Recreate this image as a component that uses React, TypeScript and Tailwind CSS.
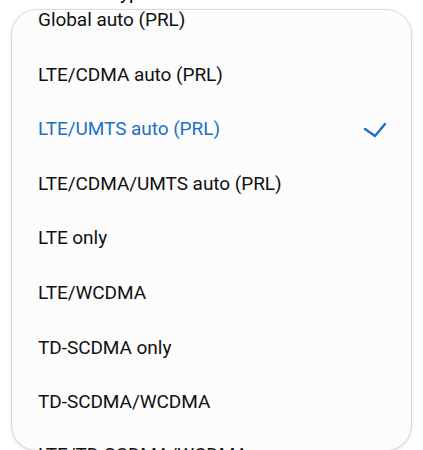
const modes = [
  "Global auto (PRL)",
  "LTE/CDMA auto (PRL)",
  "LTE/UMTS auto (PRL)",
  "LTE/CDMA/UMTS auto (PRL)",
  "LTE only",
  "LTE/WCDMA",
  "TD-SCDMA only",
  "TD-SCDMA/WCDMA",
  "LTE/TD-SCDMA/WCDMA",
]

const selected = "LTE/UMTS auto (PRL)"

function Check() {
  return (
    <svg width="24" height="20" viewBox="0 0 24 20" fill="none" className="mr-[-2px] mt-[2px]">
      <path d="M2 9 L12 16 L22 4" stroke="#1f6fc6" strokeWidth="2.4" strokeLinecap="round" strokeLinejoin="round" />
    </svg>
  )
}

export default function App() {
  return (
    <div className="relative w-[423px] h-[450px] overflow-hidden bg-white font-['Roboto',sans-serif]">
      {/* page content behind the popup */}
      <div className="-mt-[18px] pl-[38px] text-[19px] text-black leading-[22px]">Network type</div>

      <div className="absolute left-[11px] top-[9px] w-[401px] h-[442px] rounded-[26px] border border-[#dcdcdc] bg-[#fcfcfc] shadow-[0_1px_3px_rgba(0,0,0,0.12)] overflow-hidden">
        <ul className="-mt-[17px]">
          {modes.map((m, i) => (
            <li
              key={m}
              className={`h-[54.6px] flex items-center justify-between pl-[26px] pr-[26px] ${i === modes.length - 1 ? "-mt-[2px]" : ""}`}
            >
              <span className={`text-[19px] tracking-[-0.05px] ${m === selected ? "text-[#1f6fc6]" : "text-[#111111]"}`}>{m}</span>
              {m === selected && <Check />}
            </li>
          ))}
        </ul>
      </div>
    </div>
  )
}
